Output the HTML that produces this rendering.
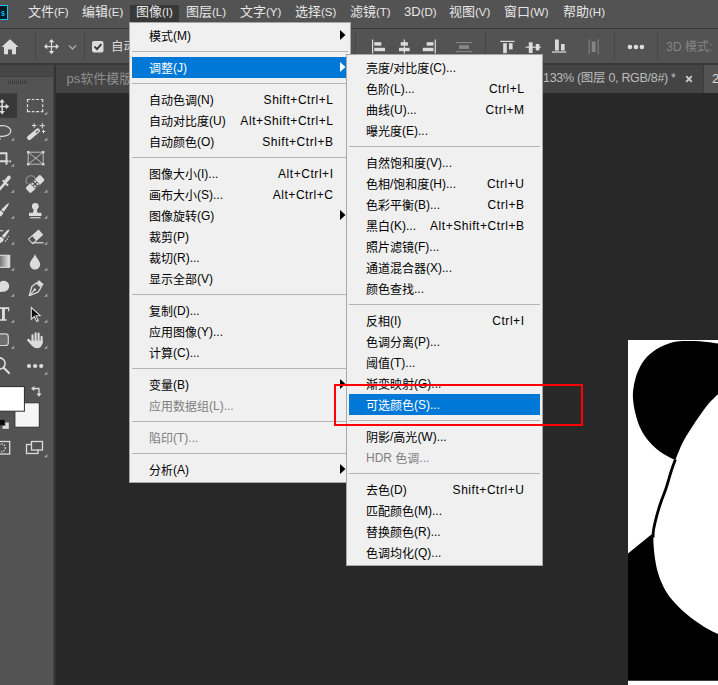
<!DOCTYPE html>
<html lang="zh-CN">
<head>
<meta charset="utf-8">
<title>ps</title>
<style>
*{box-sizing:border-box;margin:0;padding:0}
html,body{width:718px;height:685px;overflow:hidden;background:#282828}
body{position:relative;font-family:"Liberation Sans","Noto Sans CJK SC",sans-serif;font-size:12px;color:#000}
.abs{position:absolute}
#menubar{left:0;top:0;width:718px;height:28px;background:#535353}
#band{left:0;top:28px;width:718px;height:1px;background:#383838}
#optbar{left:0;top:29px;width:718px;height:34px;background:#535353}
#gap{left:0;top:63px;width:718px;height:2px;background:#383838}
#tabbar{left:56px;top:65px;width:662px;height:28px;background:#444444}
#tools{left:0;top:65px;width:53px;height:620px;background:#535353}
#toolhead{left:0;top:65px;width:53px;height:12px;background:#464646;border-bottom:1px solid #3e3e3e}
#tooldiv{left:53px;top:65px;width:3px;height:620px;background:#333;border-left:1.500px solid #474747}
.mb{position:absolute;top:3px;height:18px;line-height:18px;font-size:13px;color:#e6e6e6;white-space:nowrap}
.menu{position:absolute;background:#f0f0f0;border:1px solid #a8a8a8}
.mi{position:absolute;left:0;height:21px;line-height:24px;white-space:nowrap;font-size:12px;color:#000}
.mi .t{position:absolute;top:0}
.mi .l{position:relative;top:-1px}
.mi .k{position:absolute;top:-1px;text-align:right;letter-spacing:0.55px;margin-right:-0.55px}
.mi.dis{color:#7e7e7e}
.mi.hl{background:#0078d7;color:#fff}
.sep{position:absolute;height:1px;background:#b4b4b4}
.arr{position:absolute;width:5.5px;height:10px;clip-path:polygon(0 0,100% 50%,0 100%)}
.tab{font-size:13px;line-height:19px;white-space:nowrap}
.mb .la{font-size:11.500px;position:relative;top:-0.500px}
</style>
</head>
<body>
<div id="menubar" class="abs"></div>
<div id="band" class="abs"></div>
<div id="optbar" class="abs"></div>
<div id="gap" class="abs"></div>
<div id="tabbar" class="abs"></div>
<div id="tools" class="abs"></div>
<div id="toolhead" class="abs"></div>
<div id="tooldiv" class="abs"></div>
<div class="abs" style="left:-2px;top:5px;width:10px;height:15px;background:#001a24;border:1.300px solid #19c3f5"></div><div class="abs" style="left:0.800px;top:6.500px;font-size:9px;line-height:12px;color:#19c3f5;font-weight:bold;transform:scaleX(0.800);transform-origin:0 0">s</div><div class="abs" style="left:130px;top:5px;width:49px;height:17px;background:#383838"></div><span class="mb" style="left:28px">文件<span class="la">(F)</span></span><span class="mb" style="left:82px">编辑<span class="la">(E)</span></span><span class="mb" style="left:136px">图像<span class="la">(I)</span></span><span class="mb" style="left:186px">图层<span class="la">(L)</span></span><span class="mb" style="left:240px">文字<span class="la">(Y)</span></span><span class="mb" style="left:295px">选择<span class="la">(S)</span></span><span class="mb" style="left:350px">滤镜<span class="la">(T)</span></span><span class="mb" style="left:404px">3D<span class="la">(D)</span></span><span class="mb" style="left:449px">视图<span class="la">(V)</span></span><span class="mb" style="left:504px">窗口<span class="la">(W)</span></span><span class="mb" style="left:563px">帮助<span class="la">(H)</span></span>
<svg class="abs" style="left:0;top:0" width="718" height="65" viewBox="0 0 718 65">
<g fill="#dcdcdc">
<!-- home -->
<path d="M10 39.300 L1.500 47 L4 47 L4 54.200 L8 54.200 L8 49.500 L12 49.500 L12 54.200 L16 54.200 L16 47 L18.500 47 Z"/>
<!-- move -->
<g transform="translate(51.500 46.600) scale(0.920) translate(-51.500 -46.700)"><g stroke="#dcdcdc" stroke-width="1.300" fill="none"><path d="M51.500 40.500V53M45 46.700H58"/></g>
<path d="M51.500 38.500l3 3.500h-6zM51.500 55l3-3.500h-6zM43.300 46.700l3.500-3v6zM59.700 46.700l-3.500-3v6z"/></g>
</g>
<path d="M69 45.5l3.5 3.5l3.5-3.500" stroke="#a8a8a8" stroke-width="1.4" fill="none"/>
<g fill="#464646">
<rect x="35" y="32" width="1" height="28"/>
<rect x="84" y="32" width="1" height="28"/>
<rect x="355" y="32" width="1" height="28"/>
<rect x="485" y="32" width="1" height="28"/>
<rect x="614" y="32" width="1" height="28"/>
<rect x="657" y="32" width="1" height="28"/>
</g>
<!-- checkbox -->
<rect x="92" y="41" width="11.500" height="11.500" rx="2" fill="#dcdcdc"/>
<path d="M94.500 46.500l2.500 2.700l4.300-5" stroke="#303030" stroke-width="1.800" fill="none"/>
<g fill="#dcdcdc">
<!-- align left -->
<rect x="372" y="39.500" width="1.200" height="14"/><rect x="374.300" y="42.200" width="7" height="3.400"/><rect x="374.300" y="47.800" width="10.700" height="3.400"/>
<!-- align center h -->
<rect x="403.700" y="39.500" width="1.200" height="14"/><rect x="400.700" y="42.200" width="7.200" height="3.400"/><rect x="399" y="47.800" width="10.600" height="3.400"/>
<!-- align right -->
<rect x="434.700" y="39.500" width="1.200" height="14"/><rect x="426.700" y="42.200" width="6.800" height="3.400"/><rect x="422.800" y="47.800" width="10.700" height="3.400"/>
<!-- align top -->
<rect x="500.300" y="40.800" width="14.200" height="1.200"/><rect x="503.200" y="43.200" width="3.600" height="10"/><rect x="509" y="43.200" width="3.600" height="6.200"/>
<!-- align vcenter -->
<rect x="525.600" y="46.600" width="15.200" height="1.200"/><rect x="528.800" y="42.300" width="3.800" height="10.700"/><rect x="535.800" y="44" width="3.600" height="6.400"/>
<!-- align bottom -->
<rect x="552" y="51.400" width="14.200" height="1.200"/><rect x="555" y="39.500" width="3.800" height="11"/><rect x="561" y="44" width="3.600" height="6.500"/>
<!-- dots -->
<circle cx="629.900" cy="47" r="2.300"/><circle cx="635.900" cy="47" r="2.300"/><circle cx="641.900" cy="47" r="2.300"/>
</g>
<g fill="#858585">
<rect x="455.800" y="42" width="16.400" height="1.100"/><rect x="455.800" y="51" width="16.400" height="1.100"/><rect x="459" y="45.200" width="10" height="3.800"/>
<rect x="588.600" y="39.300" width="1.100" height="15"/><rect x="597.600" y="39.300" width="1.100" height="15"/><rect x="591.700" y="41.500" width="3.800" height="10.600"/>
</g>
<text x="111" y="51.200" font-size="12.500" fill="#dcdcdc" font-family="Liberation Sans, Noto Sans CJK SC, sans-serif">自动</text>
<text x="666.300" y="50.800" font-size="12" fill="#858585" font-family="Liberation Sans, Noto Sans CJK SC, sans-serif">3D 模式:</text>
</svg>

<div class="abs" style="left:704px;top:65px;width:14px;height:28px;background:#535353"></div><div class="abs" style="left:703px;top:65px;width:1px;height:28px;background:#3a3a3a"></div><span class="abs tab" style="left:66.500px;top:69px;color:#8e8e8e">ps软件模版</span><span class="abs tab" style="left:543px;top:69px;color:#bcbcbc;font-size:12.500px;letter-spacing:-0.300px">133% (图层 0, RGB/8#) *</span><svg class="abs" style="left:685px;top:75px" width="8" height="8" viewBox="0 0 8 8"><path d="M1.200 1.200L6.800 6.800M6.800 1.200L1.200 6.800" stroke="#cacaca" stroke-width="1.900"/></svg><span class="abs tab" style="left:712px;top:69px;color:#dcdcdc">2</span>
<svg class="abs" style="left:0;top:65px" width="54" height="620" viewBox="0 65 54 620">
<!-- grip -->
<g fill="#3e3e3e"><rect x="8" y="80.500" width="1" height="3.500"/><rect x="10" y="80.500" width="1" height="3.500"/><rect x="12" y="80.500" width="1" height="3.500"/><rect x="14" y="80.500" width="1" height="3.500"/><rect x="16" y="80.500" width="1" height="3.500"/><rect x="18" y="80.500" width="1" height="3.500"/><rect x="20" y="80.500" width="1" height="3.500"/><rect x="22" y="80.500" width="1" height="3.500"/><rect x="24" y="80.500" width="1" height="3.500"/><rect x="26" y="80.500" width="1" height="3.500"/></g>
<!-- selected tool bg -->
<rect x="0" y="93.400" width="17" height="24.400" fill="#383838"/>
<!-- flyout triangles -->
<g fill="#a6a6a6">
<path d="M47.300 111.500v3.300h-3.300z"/><path d="M47.300 137.500v3.300h-3.300z"/><path d="M47.300 189.500v3.300h-3.300z"/><path d="M47.300 215.500v3.300h-3.300z"/><path d="M47.300 241.500v3.300h-3.300z"/><path d="M47.300 267.500v3.300h-3.300z"/><path d="M47.300 293.500v3.300h-3.300z"/><path d="M47.300 319.500v3.300h-3.300z"/><path d="M47.300 345.500v3.300h-3.300z"/><path d="M47.300 371.500v3.300h-3.300z"/><path d="M47.300 454v3.300h-3.300z"/>
<path d="M14.200 137.500v3.300h-3.300z"/><path d="M14.200 163.500v3.300h-3.300z"/><path d="M14.200 189.500v3.300h-3.300z"/><path d="M14.200 215.500v3.300h-3.300z"/><path d="M14.200 241.500v3.300h-3.300z"/><path d="M14.200 267.500v3.300h-3.300z"/><path d="M14.200 293.500v3.300h-3.300z"/><path d="M14.200 319.500v3.300h-3.300z"/><path d="M14.200 345.500v3.300h-3.300z"/>
</g>
<!-- COL 0 -->
<g fill="#dcdcdc" stroke="none">
<!-- move -->
<rect x="1.400" y="101" width="1.500" height="11.500"/><rect x="0" y="105.800" width="6.500" height="1.500"/>
<path d="M9.200 106.500l-3.500-2.800v5.600zM2.100 99l2.800 3.400h-5.600zM2.100 114.400l2.800-3.400h-5.600z"/>
</g>
<!-- lasso -->
<ellipse cx="2.500" cy="131" rx="8.300" ry="5.400" fill="none" stroke="#dcdcdc" stroke-width="1.300"/>
<path d="M0 136.500q-1 1.800 0.500 3" stroke="#dcdcdc" stroke-width="1.200" fill="none"/>
<!-- crop -->
<path d="M0 153.200H6.500V164.700M0 161.300H8.500" stroke="#dcdcdc" stroke-width="1.900" fill="none"/>
<rect x="9.300" y="160.400" width="1.800" height="1.800" fill="#dcdcdc"/>
<!-- eyedropper -->
<path d="M9 177.500L6.200 180.800" stroke="#dcdcdc" stroke-width="3.600" stroke-linecap="round" fill="none"/>
<path d="M2.800 180.200L8 185.600" stroke="#dcdcdc" stroke-width="2" fill="none"/>
<path d="M5 183.200L-1 190" stroke="#dcdcdc" stroke-width="2.600" stroke-linecap="round" fill="none"/>
<!-- brush -->
<path d="M9 203L8.200 205.500L3.800 211.800L1.200 209.800L6.500 204.400Z" fill="#dcdcdc"/>
<path d="M3.200 212.600C3 215 1.200 216.500 -1 216.800V211.300L0.800 210.500Z" fill="#dcdcdc"/>
<!-- history brush -->
<path d="M9.600 229L8.800 231.500L4.400 238L1.800 236L7 230.400Z" fill="#dcdcdc"/>
<path d="M3.800 238.800C3.600 241.200 1.500 243 -1 243.200V237.500L1.400 236.700Z" fill="#dcdcdc"/>
<rect x="-1" y="230.200" width="4.200" height="1.100" fill="#dcdcdc"/>
<g fill="#dcdcdc"><circle cx="8.300" cy="236.600" r="0.700"/><circle cx="7.300" cy="239" r="0.700"/><circle cx="5.600" cy="241" r="0.700"/></g>
<!-- gradient -->
<defs><linearGradient id="gr" x1="0" x2="1"><stop offset="0" stop-color="#555"/><stop offset="1" stop-color="#e8e8e8"/></linearGradient></defs>
<rect x="-3" y="255.300" width="12.700" height="12" fill="url(#gr)" stroke="#dcdcdc" stroke-width="1.100"/>
<!-- dodge/blob -->
<circle cx="3.700" cy="286.200" r="5.500" fill="#dcdcdc"/><circle cx="0.500" cy="287.800" r="4.200" fill="#dcdcdc"/>
<!-- type T -->
<path d="M-1 307.200H9.200V311.200H8V309H4.900V319.300H6.700V320.800H-1V319.300H2V309H-1Z" fill="#dcdcdc"/>
<!-- rounded rect -->
<rect x="-4" y="333.900" width="12.300" height="11.600" rx="2.800" fill="#6e6e6e" stroke="#d4d4d4" stroke-width="1.200"/>
<!-- zoom -->
<circle cx="-0.500" cy="363.500" r="5.600" fill="none" stroke="#dcdcdc" stroke-width="1.600"/>
<path d="M3.700 367.700l5.300 5.300" stroke="#dcdcdc" stroke-width="2.200" stroke-linecap="round"/>
<!-- COL 1 -->
<!-- marquee -->
<path d="M27.500 102.300V99.500H30.300M31.800 99.500H34.500M36 99.500H39.100M40.800 99.500H42.700V102.300M42.700 104.200V107.200M42.700 109V111.700H40.800M39.100 111.700H36M34.500 111.700H31.800M30.300 111.700H27.500V109M27.500 107.200V104.200" stroke="#dcdcdc" stroke-width="1.200" fill="none"/>
<!-- magic wand -->
<path d="M29.300 137.700L37.700 130.600" stroke="#dcdcdc" stroke-width="4.500" stroke-linecap="round"/>
<path d="M36.300 132.300L37.800 131" stroke="#535353" stroke-width="1.300" stroke-linecap="round"/>
<path d="M34.200 123.300v4.400M32 125.500h4.400M42.300 123v5.400M39.600 125.700h5.400M43.500 129.800v3.400M41.800 131.500h3.400" stroke="#dcdcdc" stroke-width="1" fill="none"/>
<!-- frame -->
<path d="M28.200 152.200h15v12h-15zM28.200 152.200l15 12M43.200 152.200l-15 12" stroke="#c8c8c8" stroke-width="0.900" fill="none"/>
<g fill="#dcdcdc"><rect x="27" y="151" width="2.300" height="2.300"/><rect x="42.100" y="151" width="2.300" height="2.300"/><rect x="27" y="163.100" width="2.300" height="2.300"/><rect x="42.100" y="163.100" width="2.300" height="2.300"/></g>
<!-- healing band-aid -->
<g transform="translate(35.100 184) rotate(-43)">
<rect x="-10" y="-3.800" width="20" height="7.600" rx="1.800" fill="#dcdcdc"/>
<rect x="-3.600" y="-3.800" width="7.200" height="7.600" fill="#535353"/>
<g fill="#dcdcdc"><rect x="-2.700" y="-2.700" width="2" height="2"/><rect x="0.700" y="-2.700" width="2" height="2"/><rect x="-2.700" y="0.700" width="2" height="2"/><rect x="0.700" y="0.700" width="2" height="2"/></g>
<rect x="-3.900" y="-3.800" width="0.800" height="7.600" fill="#dcdcdc"/><rect x="3.100" y="-3.800" width="0.800" height="7.600" fill="#dcdcdc"/>
</g>
<path d="M27.200 183.500a4.700 4.700 0 1 1 7.500-6" stroke="#dcdcdc" stroke-width="1.100" stroke-dasharray="0.900 1.100" fill="none"/>
<!-- stamp -->
<circle cx="35.300" cy="206.300" r="3.400" fill="#dcdcdc"/>
<path d="M33.800 208.500h3l0.700 4.500h-4.400z" fill="#dcdcdc"/>
<rect x="29" y="212.800" width="12.500" height="3.200" rx="0.600" fill="#dcdcdc"/>
<rect x="30" y="217.200" width="10.500" height="1.100" fill="#dcdcdc"/>
<!-- eraser -->
<g transform="translate(35.400 237.100) rotate(-42)">
<rect x="-7" y="-3.600" width="14.500" height="7.200" rx="0.800" fill="#dcdcdc"/>
<rect x="-6" y="-2.600" width="4.200" height="5.200" fill="#535353"/>
</g>
<rect x="32.500" y="242.200" width="11" height="1.200" fill="#dcdcdc"/>
<!-- drop -->
<path d="M35 254.200C36.500 258 40.200 261.200 40.200 264.300A5.200 5.200 0 0 1 29.800 264.300C29.800 261.200 33.500 258 35 254.200Z" fill="#dcdcdc"/>
<!-- pen -->
<g transform="translate(35.300 289) rotate(42)">
<rect x="-3.200" y="-9" width="6.400" height="3.200" rx="0.500" fill="#dcdcdc"/>
<path d="M-3.200 -5.200H3.200L4.200 0.500L0 9L-4.200 0.500Z" fill="none" stroke="#dcdcdc" stroke-width="1.300" stroke-linejoin="round"/>
<path d="M0 8V1.500" stroke="#dcdcdc" stroke-width="1"/><circle cx="0" cy="0.800" r="1.300" fill="#dcdcdc"/>
</g>
<!-- path select arrow -->
<path d="M31.300 307.600V319.200L34.300 316.500L36.800 321.600L38.400 320.800L36 315.800L40.100 315.600Z" fill="#0c0c0c" stroke="#dcdcdc" stroke-width="1.100" stroke-linejoin="miter"/>
<!-- hand -->
<path d="M32.500 335.200V343M35.600 333.200V343M38.600 333.600V343M41.600 336.800V343" stroke="#dcdcdc" stroke-width="2.100" stroke-linecap="round" fill="none"/>
<path d="M28.300 339.900L32.800 345" stroke="#dcdcdc" stroke-width="2.400" stroke-linecap="round" fill="none"/>
<path d="M31.400 340.500H42.650C42.650 345 41 348.200 37 348.200C33.500 348.200 32 346 31.400 343Z" fill="#dcdcdc"/>
<!-- dots -->
<g fill="#dcdcdc"><circle cx="29" cy="366" r="2.100"/><circle cx="35.100" cy="366" r="2.100"/><circle cx="41.200" cy="366" r="2.100"/></g>
<!-- swatches -->
<rect x="14.900" y="402.800" width="24.400" height="24.400" fill="#f5f5f5" stroke="#333333" stroke-width="1"/>
<rect x="-1" y="386.600" width="25.400" height="24.600" fill="#ffffff" stroke="#2b2b2b" stroke-width="1"/>
<!-- swap arrows -->
<path d="M33.500 388.500H39V394.500" stroke="#dcdcdc" stroke-width="1.300" fill="none"/>
<path d="M31 388.500l3.300-2.600v5.200zM39 396.800l-2.600-3.300h5.200z" fill="#dcdcdc"/>
<!-- default colors -->
<rect x="2.500" y="422.500" width="6.300" height="6.300" fill="#dcdcdc"/>
<rect x="-1" y="419.500" width="6" height="6" fill="#0a0a0a" stroke="#535353" stroke-width="0.800"/>
<!-- quick mask -->
<rect x="-3" y="441.500" width="12.700" height="12.500" fill="none" stroke="#dcdcdc" stroke-width="1.300"/>
<circle cx="1.500" cy="447.800" r="3.800" fill="none" stroke="#dcdcdc" stroke-width="1.300" stroke-dasharray="1.300 1.200"/>
<!-- screen mode -->
<rect x="26.500" y="444.500" width="11.500" height="9" fill="#535353" stroke="#dcdcdc" stroke-width="1.300"/>
<rect x="31.500" y="441.500" width="11" height="8.500" fill="#535353" stroke="#dcdcdc" stroke-width="1.300"/>
</svg>

<svg class="abs" style="left:628px;top:340px" width="90" height="345" viewBox="628 340 90 345">
<rect x="628" y="340" width="90" height="345" fill="#ffffff"/>
<path d="M720.6 343.9C717.2 343.5 706.5 341.8 700.2 341.3C693.9 340.8 687.5 340.8 682.7 341.0C677.8 341.3 675.4 341.4 671.0 342.8C666.6 344.1 660.8 346.4 656.4 349.2C652.0 352.0 647.9 355.5 644.7 359.4C641.6 363.3 639.3 367.9 637.4 372.6C635.6 377.2 634.4 382.8 633.6 387.2C632.9 391.5 632.7 394.5 633.0 398.8C633.3 403.2 634.2 408.6 635.4 413.4C636.6 418.3 638.3 423.6 640.3 428.0C642.4 432.4 644.7 436.1 647.6 439.7C650.6 443.4 654.4 447.1 657.9 449.9C661.3 452.7 665.2 454.9 668.1 456.6C671.0 458.3 674.2 459.6 675.4 460.1L675.4 460.1C676.6 457.2 680.0 448.0 682.7 442.6C685.3 437.3 688.5 432.7 691.4 428.0C694.4 423.4 697.3 419.0 700.2 414.9C703.1 410.8 705.5 407.1 708.9 403.2C712.4 399.4 718.7 393.7 720.6 391.8Z" fill="#000"/>
<path d="M675.4 459.6C674.6 461.6 672.6 466.9 671.0 471.8C669.4 476.8 667.4 484.2 665.7 489.3C664.0 494.5 662.3 497.9 660.8 502.5C659.2 507.1 657.6 512.5 656.4 517.1C655.2 521.7 654.0 526.8 653.5 530.3C652.9 533.7 653.2 536.3 653.2 537.6" stroke="#000" stroke-width="2.800" fill="none"/>
<path d="M627 554.2L652.9 533.2L653.5 530.3C653.5 532.4 653.2 538.8 653.5 543.4C653.7 548.0 654.2 553.1 654.9 558.0C655.7 562.9 656.4 567.7 657.9 572.6C659.3 577.5 661.3 582.6 663.7 587.2C666.1 591.8 669.0 596.2 672.5 600.3C675.9 604.5 680.0 608.4 684.1 612.0C688.3 615.7 693.1 619.3 697.3 622.2C701.4 625.1 705.1 627.3 708.9 629.5C712.8 631.7 718.7 634.4 720.6 635.4V680.8H627Z" fill="#000"/>
</svg>
<div class="menu" id="m1" style="left:129px;top:22px;width:222px;height:461px">
<div class="mi" style="top:2px;left:2px;width:216px"><span class="t" style="left:17px">模式<span class="l">(M)</span></span><span class="arr" style="left:208px;top:5px;background:#000"></span></div>
<div class="sep" style="left:2px;top:28px;width:216px"></div>
<div class="mi hl" style="top:34px;left:2px;width:216px"><span class="t" style="left:17px">调整<span class="l">(J)</span></span><span class="arr" style="left:208px;top:5px;background:#fff"></span></div>
<div class="sep" style="left:2px;top:60px;width:216px"></div>
<div class="mi" style="top:66px;left:2px;width:216px"><span class="t" style="left:17px">自动色调<span class="l">(N)</span></span><span class="k" style="right:15px">Shift+Ctrl+L</span></div>
<div class="mi" style="top:87px;left:2px;width:216px"><span class="t" style="left:17px">自动对比度<span class="l">(U)</span></span><span class="k" style="right:15px">Alt+Shift+Ctrl+L</span></div>
<div class="mi" style="top:108px;left:2px;width:216px"><span class="t" style="left:17px">自动颜色<span class="l">(O)</span></span><span class="k" style="right:15px">Shift+Ctrl+B</span></div>
<div class="sep" style="left:2px;top:134px;width:216px"></div>
<div class="mi" style="top:140px;left:2px;width:216px"><span class="t" style="left:17px">图像大小<span class="l">(I)...</span></span><span class="k" style="right:15px">Alt+Ctrl+I</span></div>
<div class="mi" style="top:161px;left:2px;width:216px"><span class="t" style="left:17px">画布大小<span class="l">(S)...</span></span><span class="k" style="right:15px">Alt+Ctrl+C</span></div>
<div class="mi" style="top:182px;left:2px;width:216px"><span class="t" style="left:17px">图像旋转<span class="l">(G)</span></span><span class="arr" style="left:208px;top:5px;background:#000"></span></div>
<div class="mi" style="top:203px;left:2px;width:216px"><span class="t" style="left:17px">裁剪<span class="l">(P)</span></span></div>
<div class="mi" style="top:224px;left:2px;width:216px"><span class="t" style="left:17px">裁切<span class="l">(R)...</span></span></div>
<div class="mi" style="top:245px;left:2px;width:216px"><span class="t" style="left:17px">显示全部<span class="l">(V)</span></span></div>
<div class="sep" style="left:2px;top:271px;width:216px"></div>
<div class="mi" style="top:277px;left:2px;width:216px"><span class="t" style="left:17px">复制<span class="l">(D)...</span></span></div>
<div class="mi" style="top:298px;left:2px;width:216px"><span class="t" style="left:17px">应用图像<span class="l">(Y)...</span></span></div>
<div class="mi" style="top:319px;left:2px;width:216px"><span class="t" style="left:17px">计算<span class="l">(C)...</span></span></div>
<div class="sep" style="left:2px;top:345px;width:216px"></div>
<div class="mi" style="top:351px;left:2px;width:216px"><span class="t" style="left:17px">变量<span class="l">(B)</span></span><span class="arr" style="left:208px;top:5px;background:#000"></span></div>
<div class="mi dis" style="top:372px;left:2px;width:216px"><span class="t" style="left:17px">应用数据组<span class="l">(L)...</span></span></div>
<div class="sep" style="left:2px;top:398px;width:216px"></div>
<div class="mi dis" style="top:404px;left:2px;width:216px"><span class="t" style="left:17px">陷印<span class="l">(T)...</span></span></div>
<div class="sep" style="left:2px;top:430px;width:216px"></div>
<div class="mi" style="top:436px;left:2px;width:216px"><span class="t" style="left:17px">分析<span class="l">(A)</span></span><span class="arr" style="left:208px;top:5px;background:#000"></span></div>
</div>
<div class="menu" id="m2" style="left:346px;top:54px;width:197px;height:512px">
<div class="mi" style="top:2px;left:2px;width:191px"><span class="t" style="left:17px">亮度<span class="l">/</span>对比度<span class="l">(C)...</span></span></div>
<div class="mi" style="top:23px;left:2px;width:191px"><span class="t" style="left:17px">色阶<span class="l">(L)...</span></span><span class="k" style="right:16px">Ctrl+L</span></div>
<div class="mi" style="top:44px;left:2px;width:191px"><span class="t" style="left:17px">曲线<span class="l">(U)...</span></span><span class="k" style="right:16px">Ctrl+M</span></div>
<div class="mi" style="top:65px;left:2px;width:191px"><span class="t" style="left:17px">曝光度<span class="l">(E)...</span></span></div>
<div class="sep" style="left:2px;top:91px;width:191px"></div>
<div class="mi" style="top:97px;left:2px;width:191px"><span class="t" style="left:17px">自然饱和度<span class="l">(V)...</span></span></div>
<div class="mi" style="top:118px;left:2px;width:191px"><span class="t" style="left:17px">色相<span class="l">/</span>饱和度<span class="l">(H)...</span></span><span class="k" style="right:16px">Ctrl+U</span></div>
<div class="mi" style="top:139px;left:2px;width:191px"><span class="t" style="left:17px">色彩平衡<span class="l">(B)...</span></span><span class="k" style="right:16px">Ctrl+B</span></div>
<div class="mi" style="top:160px;left:2px;width:191px"><span class="t" style="left:17px">黑白<span class="l">(K)...</span></span><span class="k" style="right:16px">Alt+Shift+Ctrl+B</span></div>
<div class="mi" style="top:181px;left:2px;width:191px"><span class="t" style="left:17px">照片滤镜<span class="l">(F)...</span></span></div>
<div class="mi" style="top:202px;left:2px;width:191px"><span class="t" style="left:17px">通道混合器<span class="l">(X)...</span></span></div>
<div class="mi" style="top:223px;left:2px;width:191px"><span class="t" style="left:17px">颜色查找<span class="l">...</span></span></div>
<div class="sep" style="left:2px;top:249px;width:191px"></div>
<div class="mi" style="top:255px;left:2px;width:191px"><span class="t" style="left:17px">反相<span class="l">(I)</span></span><span class="k" style="right:16px">Ctrl+I</span></div>
<div class="mi" style="top:276px;left:2px;width:191px"><span class="t" style="left:17px">色调分离<span class="l">(P)...</span></span></div>
<div class="mi" style="top:297px;left:2px;width:191px"><span class="t" style="left:17px">阈值<span class="l">(T)...</span></span></div>
<div class="mi" style="top:318px;left:2px;width:191px"><span class="t" style="left:17px">渐变映射<span class="l">(G)...</span></span></div>
<div class="mi hl" style="top:339px;left:2px;width:191px"><span class="t" style="left:17px">可选颜色<span class="l">(S)...</span></span></div>
<div class="sep" style="left:2px;top:365px;width:191px"></div>
<div class="mi" style="top:371px;left:2px;width:191px"><span class="t" style="left:17px">阴影<span class="l">/</span>高光<span class="l">(W)...</span></span></div>
<div class="mi dis" style="top:392px;left:2px;width:191px"><span class="t" style="left:17px"><span class="l">HDR </span>色调<span class="l">...</span></span></div>
<div class="sep" style="left:2px;top:418px;width:191px"></div>
<div class="mi" style="top:424px;left:2px;width:191px"><span class="t" style="left:17px">去色<span class="l">(D)</span></span><span class="k" style="right:16px">Shift+Ctrl+U</span></div>
<div class="mi" style="top:445px;left:2px;width:191px"><span class="t" style="left:17px">匹配颜色<span class="l">(M)...</span></span></div>
<div class="mi" style="top:466px;left:2px;width:191px"><span class="t" style="left:17px">替换颜色<span class="l">(R)...</span></span></div>
<div class="mi" style="top:487px;left:2px;width:191px"><span class="t" style="left:17px">色调均化<span class="l">(Q)...</span></span></div>
</div>
<div class="abs" style="left:334px;top:384px;width:249px;height:42px;border:2px solid #ff0000"></div>
</body>
</html>
